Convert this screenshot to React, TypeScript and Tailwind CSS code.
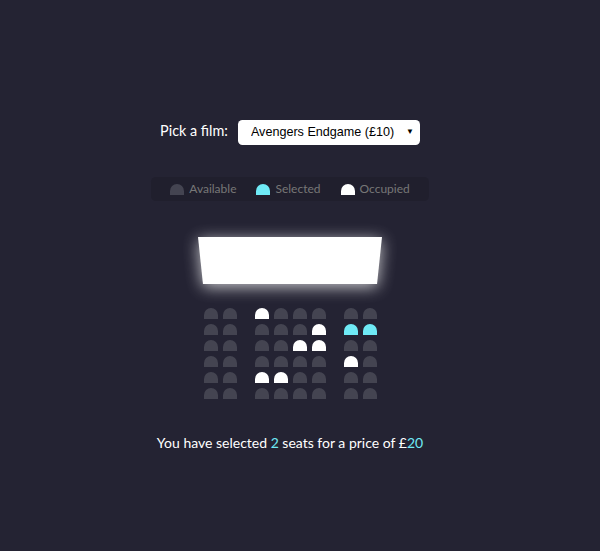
import { useState } from "react";

type SeatState = "available" | "selected" | "occupied";

const ROWS: SeatState[][] = [
  ["available", "available", "occupied", "available", "available", "available", "available", "available"],
  ["available", "available", "available", "available", "available", "occupied", "selected", "selected"],
  ["available", "available", "available", "available", "occupied", "occupied", "available", "available"],
  ["available", "available", "available", "available", "available", "available", "occupied", "available"],
  ["available", "available", "occupied", "occupied", "available", "available", "available", "available"],
  ["available", "available", "available", "available", "available", "available", "available", "available"],
];

const seatColor: Record<SeatState, string> = {
  available: "bg-[#444451]",
  selected: "bg-[#6feaf6]",
  occupied: "bg-white",
};

const Seat = ({ state }: { state: SeatState }) => (
  <div className={`w-[14px] h-[11px] rounded-t-[9px] ${seatColor[state]}`} />
);

const LegendItem = ({ state, label }: { state: SeatState; label: string }) => (
  <li className="flex items-center gap-[5px]">
    <Seat state={state} />
    <span className="text-[12px] leading-none text-[#777]">{label}</span>
  </li>
);

const App = () => {
  const [movie, setMovie] = useState("10");
  const selectedCount = 2;
  const price = Number(movie);

  return (
    <div className="min-h-screen bg-[#242333] text-white font-['Lato','Noto_Sans',sans-serif]">
      <div className="w-[580px] flex flex-col items-center pt-[119px]">
        <div className="flex items-center h-[25px]">
          <label className="text-[14.4px] leading-none">Pick a film:</label>
          <div className="relative ml-[10px]">
            <select
              value={movie}
              onChange={(e) => setMovie(e.target.value)}
              className="appearance-none w-[182px] h-[25px] bg-white text-black rounded-[4.5px] pl-[13px] pr-6 text-[12.6px] font-['Liberation_Sans',Arial,sans-serif] outline-none"
            >
              <option value="10">Avengers Endgame (£10)</option>
              <option value="12">Joker (£12)</option>
              <option value="8">Toy Story 4 (£8)</option>
              <option value="9">The Lion King (£9)</option>
            </select>
            <span className="pointer-events-none absolute right-[6px] top-[9px] text-[8px] leading-none text-black">
              ▼
            </span>
          </div>
        </div>

        <ul className="mt-[33px] flex items-center gap-[20px] h-[24px] px-[19px] rounded-[4.5px] bg-[rgba(0,0,0,0.1)]">
          <LegendItem state="available" label="Available" />
          <LegendItem state="selected" label="Selected" />
          <LegendItem state="occupied" label="Occupied" />
        </ul>

        <div className="mt-[36px] flex flex-col items-center">
          <div className="drop-shadow-[0_3px_8px_rgba(255,255,255,0.75)]">
            <div className="w-[184px] h-[47px] bg-white [clip-path:polygon(0_0,100%_0,97.3%_100%,2.7%_100%)]" />
          </div>

          <div className="mt-[24px] flex flex-col gap-[5px]">
            {ROWS.map((row, r) => (
              <div key={r} className="flex gap-[18px]">
                <div className="flex gap-[5px]">
                  {row.slice(0, 2).map((s, i) => (
                    <Seat key={i} state={s} />
                  ))}
                </div>
                <div className="flex gap-[5px]">
                  {row.slice(2, 6).map((s, i) => (
                    <Seat key={i} state={s} />
                  ))}
                </div>
                <div className="flex gap-[5px]">
                  {row.slice(6).map((s, i) => (
                    <Seat key={i} state={s} />
                  ))}
                </div>
              </div>
            ))}
          </div>
        </div>

        <p className="mt-[37px] text-[14px] leading-none">
          You have selected <span className="text-[#6feaf6]">{selectedCount}</span> seats for a price of £
          <span className="text-[#6feaf6]">{selectedCount * price}</span>
        </p>
      </div>
    </div>
  );
};

export default App;
